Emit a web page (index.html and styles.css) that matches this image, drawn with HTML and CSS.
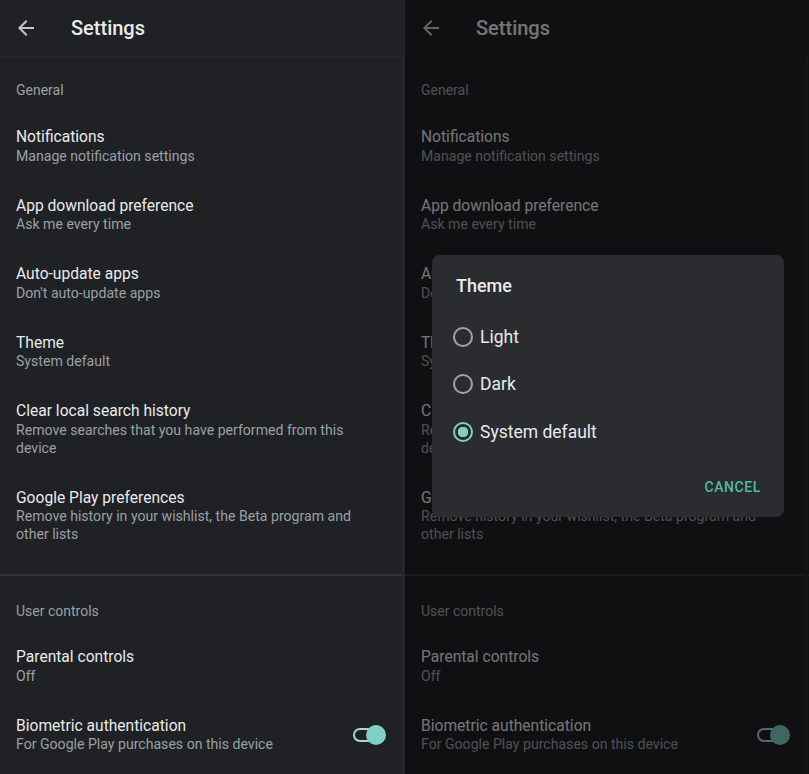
FILE: index.html
```html
<!DOCTYPE html>
<html>
<head>
  <meta charset="UTF-8" />
  <title>Settings</title>
  <link rel="stylesheet" href="styles.css">
</head>
<body>
  <div class="screens">
    <div class="phone">
      <div class="topbar">
        <svg class="back" viewBox="0 0 24 24" width="24" height="24"><path d="M20 11H7.83l5.59-5.59L12 4l-8 8 8 8 1.41-1.41L7.83 13H20v-2z"/></svg>
        <h1>Settings</h1>
      </div>
      <div class="section">
        <div class="label">General</div>
        <div class="item"><div class="text"><div class="title">Notifications</div><div class="sub">Manage notification settings</div></div></div>
        <div class="item"><div class="text"><div class="title">App download preference</div><div class="sub">Ask me every time</div></div></div>
        <div class="item"><div class="text"><div class="title">Auto-update apps</div><div class="sub">Don't auto-update apps</div></div></div>
        <div class="item"><div class="text"><div class="title">Theme</div><div class="sub">System default</div></div></div>
        <div class="item"><div class="text"><div class="title">Clear local search history</div><div class="sub">Remove searches that you have performed from this device</div></div></div>
        <div class="item"><div class="text"><div class="title">Google Play preferences</div><div class="sub">Remove history in your wishlist, the Beta program and other lists</div></div></div>
      </div>
      <div class="divider"></div>
      <div class="section">
        <div class="label label-second">User controls</div>
        <div class="item"><div class="text"><div class="title">Parental controls</div><div class="sub">Off</div></div></div>
        <div class="item"><div class="text"><div class="title">Biometric authentication</div><div class="sub">For Google Play purchases on this device</div></div>
          <div class="switch"><span class="thumb"></span></div>
        </div>
      </div>
      <div class="scrollbar"></div>
    </div>

    <div class="phone">
      <div class="topbar">
        <svg class="back" viewBox="0 0 24 24" width="24" height="24"><path d="M20 11H7.83l5.59-5.59L12 4l-8 8 8 8 1.41-1.41L7.83 13H20v-2z"/></svg>
        <h1>Settings</h1>
      </div>
      <div class="section">
        <div class="label">General</div>
        <div class="item"><div class="text"><div class="title">Notifications</div><div class="sub">Manage notification settings</div></div></div>
        <div class="item"><div class="text"><div class="title">App download preference</div><div class="sub">Ask me every time</div></div></div>
        <div class="item"><div class="text"><div class="title">Auto-update apps</div><div class="sub">Don't auto-update apps</div></div></div>
        <div class="item"><div class="text"><div class="title">Theme</div><div class="sub">System default</div></div></div>
        <div class="item"><div class="text"><div class="title">Clear local search history</div><div class="sub">Remove searches that you have performed from this device</div></div></div>
        <div class="item"><div class="text"><div class="title">Google Play preferences</div><div class="sub">Remove history in your wishlist, the Beta program and other lists</div></div></div>
      </div>
      <div class="divider"></div>
      <div class="section">
        <div class="label label-second">User controls</div>
        <div class="item"><div class="text"><div class="title">Parental controls</div><div class="sub">Off</div></div></div>
        <div class="item"><div class="text"><div class="title">Biometric authentication</div><div class="sub">For Google Play purchases on this device</div></div>
          <div class="switch"><span class="thumb"></span></div>
        </div>
      </div>
      <div class="scrollbar"></div>

      <div class="scrim"></div>
      <div class="dialog">
        <h2>Theme</h2>
        <div class="options">
          <div class="option"><span class="radio"></span>Light</div>
          <div class="option"><span class="radio"></span>Dark</div>
          <div class="option"><span class="radio checked"></span>System default</div>
        </div>
        <div class="actions"><button class="btn">Cancel</button></div>
      </div>
    </div>
  </div>
</body>
</html>
```

FILE: styles.css
```css
* {
  box-sizing: border-box;
}
body {
  margin: 0;
  background: #202124;
  font-family: Roboto, "Noto Sans", sans-serif;
  overflow: hidden;
}
.screens {
  display: flex;
  height: 774px;
}
.phone {
  position: relative;
  width: 405px;
  height: 774px;
  background: #202124;
  overflow: hidden;
}
.phone + .phone {
  width: 404px;
}
.topbar {
  display: flex;
  align-items: center;
  height: 57px;
  padding-left: 14px;
  border-bottom: 1px solid #26272a;
}
.topbar .back {
  fill: #c4c7c9;
}
.topbar h1 {
  margin: 0 0 0 33px;
  font-size: 20px;
  font-weight: 500;
  color: #e8eaed;
}
.label {
  padding: 23px 16px 11px;
  font-size: 14px;
  line-height: 20px;
  color: #9aa0a6;
}
.label-second {
  padding-top: 25px;
  padding-bottom: 10px;
}
.item {
  display: flex;
  align-items: center;
  padding: 17px 18px 15px 16px;
}
.item .text {
  flex: 1;
  padding-right: 30px;
}
.title {
  font-size: 15.6px;
  line-height: 18.5px;
  color: #e8eaed;
}
.sub {
  font-size: 14.1px;
  line-height: 18px;
  color: #9aa0a6;
}
.divider {
  height: 2px;
  margin-top: 16px;
  background: #35363a;
}
.switch {
  position: relative;
  width: 26px;
  height: 14px;
  margin-right: 8px;
  border: 2px solid #a6d8d1;
  border-radius: 7px;
}
.switch .thumb {
  position: absolute;
  right: -9px;
  top: -5px;
  width: 20px;
  height: 20px;
  border-radius: 50%;
  background: #7fcfc5;
}
.scrollbar {
  position: absolute;
  right: 1px;
  top: 57px;
  bottom: 0;
  width: 2px;
  background: #27282b;
}
.scrim {
  position: absolute;
  inset: 0;
  background: rgba(0, 0, 0, 0.5);
}
.dialog {
  position: absolute;
  left: 27px;
  top: 255px;
  width: 352px;
  padding: 20px 23px 12px 0;
  background: #2b2c2f;
  border-radius: 8px;
}
.dialog h2 {
  margin: 0 0 16px 24px;
  font-size: 18px;
  font-weight: 500;
  line-height: 22px;
  color: #e8eaed;
}
.option {
  display: flex;
  align-items: center;
  height: 47.5px;
  padding-left: 21px;
  font-size: 17.5px;
  color: #e8eaed;
}
.radio {
  width: 20px;
  height: 20px;
  margin-right: 7px;
  border: 2px solid #a0a4a8;
  border-radius: 50%;
}
.radio.checked {
  border-color: #7fcfc5;
  background: radial-gradient(circle, #7fcfc5 0 5px, transparent 5.5px);
}
.actions {
  display: flex;
  justify-content: flex-end;
  margin-top: 13px;
}
.btn {
  height: 36px;
  padding: 0;
  border: none;
  background: none;
  font-family: Roboto, sans-serif;
  font-size: 14px;
  font-weight: 500;
  letter-spacing: 0.6px;
  text-transform: uppercase;
  color: #4fb9a6;
}
```
